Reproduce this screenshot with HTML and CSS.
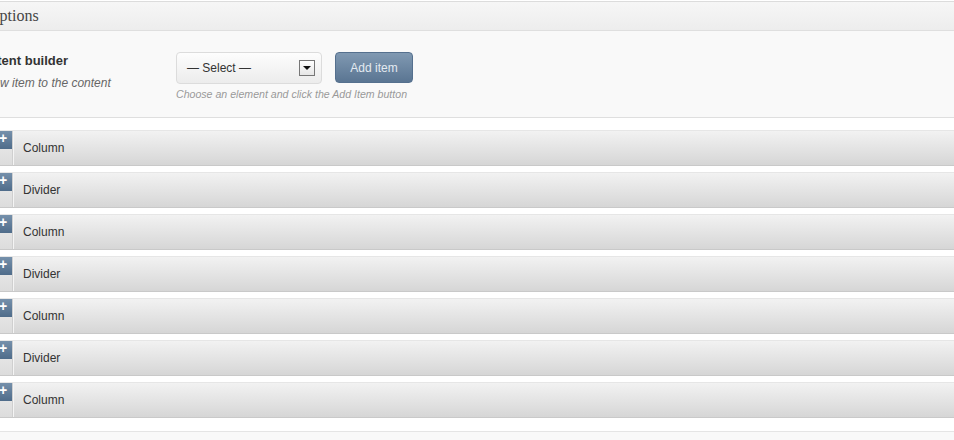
FILE: index.html
```html
<!DOCTYPE html>
<html lang="en">
<head>
  <meta charset="UTF-8" />
  <meta name="viewport" content="width=device-width, initial-scale=1.0" />
  <title>Options</title>
  <link rel="stylesheet" href="styles.css">
</head>
<body>
  <div class="metabox">
    <h3 class="metabox-title">Options</h3>
    <div class="builder">
      <div class="builder-label">
        <h4>Content builder</h4>
        <p>Add new item to the content</p>
      </div>
      <div class="builder-controls">
        <div class="controls-row">
          <div class="select">
            <span>&mdash; Select &mdash;</span>
            <span class="select-arrow"></span>
          </div>
          <button class="add-btn">Add item</button>
        </div>
        <p class="hint">Choose an element and click the Add Item button</p>
      </div>
    </div>
  </div>

  <ul class="items">
    <li class="item"><div class="handle"><span class="plus">+</span></div><span class="item-name">Column</span></li>
    <li class="item"><div class="handle"><span class="plus">+</span></div><span class="item-name">Divider</span></li>
    <li class="item"><div class="handle"><span class="plus">+</span></div><span class="item-name">Column</span></li>
    <li class="item"><div class="handle"><span class="plus">+</span></div><span class="item-name">Divider</span></li>
    <li class="item"><div class="handle"><span class="plus">+</span></div><span class="item-name">Column</span></li>
    <li class="item"><div class="handle"><span class="plus">+</span></div><span class="item-name">Divider</span></li>
    <li class="item"><div class="handle"><span class="plus">+</span></div><span class="item-name">Column</span></li>
  </ul>

  <div class="next-box"></div>
</body>
</html>
```

FILE: styles.css
```css
body { margin: 0; padding-top: 1px; background: #fff; font-family: "Liberation Sans", Arial, sans-serif; color: #333; overflow: hidden; }
.metabox { margin: 0 -40px 0 -38px; border-top: 1px solid #dcdcdc; border-bottom: 1px solid #dfdfdf; background: #f9f9f9; }
.metabox-title { margin: 0; height: 28px; line-height: 28px; padding-left: 26px; font-family: "Liberation Serif", Georgia, serif; font-weight: normal; font-size: 16px; color: #464646; background: linear-gradient(#f6f6f6, #ededed); border-bottom: 1px solid #dfdfdf; }
.builder { display: flex; padding: 21px 0 17px; }
.builder-label { width: 214px; }
.builder-label h4 { margin: 0 0 0 10px; padding-top: 1px; font-size: 13px; font-weight: bold; color: #333; line-height: 16px; }
.builder-label p { margin: 7px 0 0; font-size: 12px; font-style: italic; color: #666; }
.controls-row { display: flex; gap: 13px; }
.select { height: 30px; border: 1px solid #dcdcdc; border-radius: 4px; background: linear-gradient(#fdfdfd, #ececec); display: flex; align-items: center; justify-content: space-between; padding: 0 6px 0 10px; box-sizing: content-box; width: 128px; font-size: 12px; color: #333; }
.select-arrow { width: 14px; height: 14px; border: 1px solid #777; background: linear-gradient(#fff, #e6e6e6); position: relative; }
.select-arrow::after { content: ""; position: absolute; left: 3px; top: 5px; border-left: 4px solid transparent; border-right: 4px solid transparent; border-top: 4px solid #111; }
.add-btn { width: 78px; height: 31px; border: 1px solid #55708e; border-radius: 4px; background: linear-gradient(#8099b2, #5a7592); color: #e3eaf1; font-family: "Liberation Sans", Arial, sans-serif; font-size: 12px; padding: 0; cursor: pointer; }
.hint { margin: 4px 0 0; font-size: 10.6px; font-style: italic; color: #999; }
.items { list-style: none; margin: 12px -40px 0 -38px; padding: 0; }
.item { display: flex; height: 34px; margin-bottom: 6px; border-top: 1px solid #e6e6e6; border-bottom: 1px solid #c9c9c9; background: linear-gradient(#f2f2f2, #d6d6d6); }
.handle { width: 50px; display: flex; flex-direction: column; align-items: flex-end; border-right: 1px solid #cfcfcf; box-shadow: 1px 0 0 #f4f4f4; background: linear-gradient(#eeeeee, #dcdcdc); }
.plus { width: 18px; height: 18px; background: linear-gradient(#7590ab, #4f6c8a); color: #fff; font-weight: bold; font-size: 14px; line-height: 14px; text-align: center; }
.item-name { padding-left: 10px; font-size: 12px; line-height: 34px; color: #333; }
.next-box { margin: 13px -40px 0 -38px; height: 20px; border-top: 1px solid #e5e5e5; background: #f9f9f9; }
```
